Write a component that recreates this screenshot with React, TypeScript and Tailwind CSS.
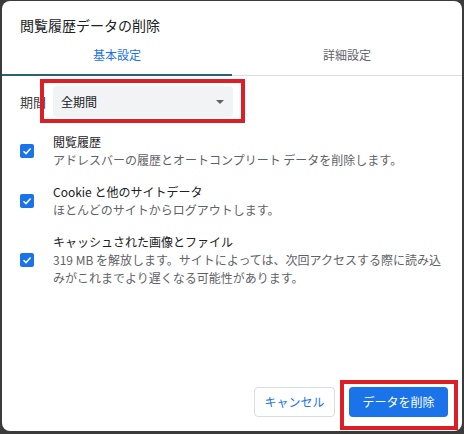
import React from "react";

const font = { fontFamily: '"Noto Sans CJK JP", "Noto Sans", sans-serif' };

function Check() {
  return (
    <div className="w-[14px] h-[14px] shrink-0 rounded-[2px] bg-[#1a73e8] flex items-center justify-center">
      <svg width="10" height="10" viewBox="0 0 10 10">
        <path d="M1.5 5.2 L4 7.6 L8.6 2.6" fill="none" stroke="white" strokeWidth="1.5" />
      </svg>
    </div>
  );
}

function Item({ title, desc }: { title: string; desc: React.ReactNode }) {
  return (
    <div className="flex items-center gap-[19px]">
      <Check />
      <div className="flex flex-col text-[12px] leading-[18px]">
        <div className="text-[#202124]">{title}</div>
        <div className="text-[#5f6368] w-[392px]">{desc}</div>
      </div>
    </div>
  );
}

export default function App() {
  return (
    <div className="w-[464px] h-[434px] bg-[#3b3b3b] pt-[1px] pl-[2px] pr-[2px] pb-[3px] relative" style={font}>
      <div className="w-full h-full bg-white rounded-[8px] flex flex-col">
        <div className="pl-[18px] pt-[14px] text-[14px] leading-[20px] text-[#202124]">閲覧履歴データの削除</div>
        <div className="flex h-[41px] border-b border-[#dadce0] text-[12px]">
          <div className="flex-1 flex items-center justify-center text-[#1a73e8] relative">
            基本設定
            <div className="absolute left-0 right-0 bottom-[-1px] h-[2px] bg-[#2c6173]" />
          </div>
          <div className="flex-1 flex items-center justify-center text-[#5f6368]">詳細設定</div>
        </div>
        <div className="pl-[18px] pt-[10px] flex items-center gap-[7px]">
          <div className="text-[13px] text-[#3c4043]">期間</div>
          <div className="w-[180px] h-[31px] bg-[#f1f3f4] rounded-[4px] flex items-center justify-between pl-[8px] pr-[9px]">
            <span className="text-[12px] text-[#202124]">全期間</span>
            <svg width="8" height="4" viewBox="0 0 8 4">
              <path d="M0 0 L8 0 L4 4 Z" fill="#5f6368" />
            </svg>
          </div>
        </div>
        <div className="pl-[18px] pt-[16px] flex flex-col gap-[14px]">
          <Item title="閲覧履歴" desc="アドレスバーの履歴とオートコンプリート データを削除します。" />
          <Item title="Cookie と他のサイトデータ" desc="ほとんどのサイトからログアウトします。" />
          <Item
            title="キャッシュされた画像とファイル"
            desc="319 MB を解放します。サイトによっては、次回アクセスする際に読み込みがこれまでより遅くなる可能性があります。"
          />
        </div>
        <div className="mt-auto flex justify-end gap-[14px] pr-[14px] pb-[14px]">
          <button className="h-[30px] w-[81px] rounded-[4px] border border-[#dadce0] bg-white text-[12px] text-[#1a73e8]">キャンセル</button>
          <button className="h-[30px] w-[99px] rounded-[4px] bg-[#1a73e8] text-[12px] text-white">データを削除</button>
        </div>
      </div>
      <div className="absolute left-[40px] top-[79px] w-[205px] h-[44px] border-[4px] border-[#dc1f26]" />
      <div className="absolute left-[340px] top-[380px] w-[118px] h-[50px] border-[4px] border-[#dc1f26]" />
    </div>
  );
}
